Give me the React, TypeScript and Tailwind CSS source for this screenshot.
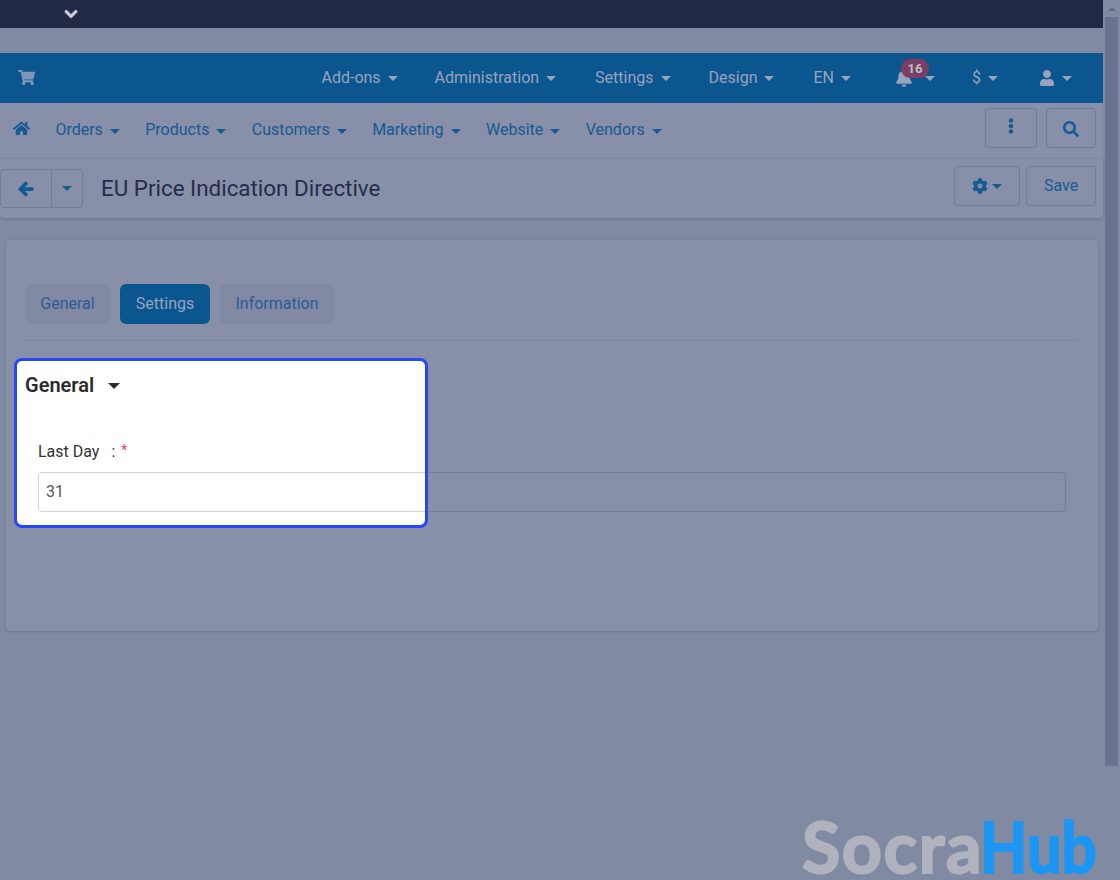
import { FaArrowLeft, FaBell, FaChevronDown, FaCog, FaEllipsisV, FaHome, FaSearch, FaShoppingCart, FaUser } from 'react-icons/fa'

function Caret({ className }: { className: string }) {
  return <span className={`inline-block h-0 w-0 border-x-[5px] border-t-[5px] border-x-transparent ${className}`} />
}

function TopItem({ label }: { label: string }) {
  return (
    <div className="flex items-center gap-[7px]">
      <span>{label}</span>
      <Caret className="border-t-[#98a3bd]" />
    </div>
  )
}

function SubItem({ label }: { label: string }) {
  return (
    <div className="flex items-center gap-[7px]">
      <span>{label}</span>
      <Caret className="mt-[3px] border-t-[#155a93]" />
    </div>
  )
}

export default function App() {
  return (
    <div className="relative flex h-[880px] w-[1120px] overflow-hidden bg-[#808aa3] font-['Roboto',sans-serif] text-[16px]">
      <div className="flex w-[1103px] flex-col">
        <div className="h-[28px] bg-[#212945] pl-[64px] pt-[7px] text-[#c5c9d6]">
          <FaChevronDown className="h-[14px] w-[14px]" stroke="currentColor" strokeWidth={40} />
        </div>

        <div className="mt-[25px] flex h-[50px] items-center justify-between bg-[#0b568f] pl-[18px] pr-[31px] text-[#98a3bd]">
          <FaShoppingCart className="mb-[2px] h-[17px] w-[17px] text-[#7f97b8]" />
          <div className="flex items-center">
            <TopItem label="Add-ons" />
            <div className="ml-[37px]"><TopItem label="Administration" /></div>
            <div className="ml-[39px]"><TopItem label="Settings" /></div>
            <div className="ml-[38px]"><TopItem label="Design" /></div>
            <div className="ml-[39px]"><TopItem label="EN" /></div>
            <div className="relative ml-[44px] flex items-center gap-[12px]">
              <FaBell className="h-[18px] w-[18px] text-[#98a3bd]" />
              <Caret className="border-t-[#98a3bd]" />
              <span className="absolute left-[6px] top-[-10px] flex h-[19px] w-[28px] items-center justify-center rounded-[9px] bg-[#7c3f63] text-[13px] font-bold text-[#b9bfd0]">16</span>
            </div>
            <div className="ml-[37px]"><TopItem label="$" /></div>
            <div className="ml-[41px] flex items-center gap-[7px]">
              <FaUser className="h-[16px] w-[16px]" />
              <Caret className="border-t-[#98a3bd]" />
            </div>
          </div>
        </div>

        <div className="flex h-[56px] items-center justify-between border-b border-b-[#848ca5] bg-[#888fa8] pl-[13px] pr-[7px] text-[#155a93]">
          <div className="mb-[2px] flex items-center gap-[25.4px]">
            <FaHome className="mb-[3px] h-[17px] w-[17px]" />
            <SubItem label="Orders" />
            <SubItem label="Products" />
            <SubItem label="Customers" />
            <SubItem label="Marketing" />
            <SubItem label="Website" />
            <SubItem label="Vendors" />
          </div>
          <div className="mt-[-6px] flex gap-[9px]">
            <div className="flex h-[40px] w-[52px] items-center justify-center rounded-[4px] border border-[#737d98]">
              <FaEllipsisV className="mb-[4px] h-[16px] w-[16px]" />
            </div>
            <div className="flex h-[40px] w-[50px] items-center justify-center rounded-[4px] border border-[#737d98]">
              <FaSearch className="mt-[2px] h-[16px] w-[16px]" />
            </div>
          </div>
        </div>

        <div className="flex h-[59px] items-center justify-between rounded-b-[4px] bg-[#888fa8] pr-[7px] shadow-[0_1px_3px_rgba(60,70,100,0.35)]">
          <div className="flex items-center">
            <div className="flex h-[39px] w-[83px] rounded-[4px] border border-[#737d98]">
              <div className="flex w-[51px] items-center justify-center border-r border-r-[#737d98] text-[#155a93]">
                <FaArrowLeft className="h-[16px] w-[16px]" stroke="currentColor" strokeWidth={40} />
              </div>
              <div className="flex flex-1 items-center justify-center">
                <Caret className="border-t-[#155a93]" />
              </div>
            </div>
            <span className="ml-[18px] text-[22.4px] text-[#252d4a]">EU Price Indication Directive</span>
          </div>
          <div className="mt-[-5px] flex gap-[6px] text-[#155a93]">
            <div className="flex h-[40px] w-[66px] items-center justify-center gap-[4px] rounded-[4px] border border-[#737d98]">
              <FaCog className="h-[16px] w-[16px]" />
              <Caret className="border-t-[#155a93]" />
            </div>
            <div className="flex h-[40px] w-[70px] items-center justify-center rounded-[4px] border border-[#737d98]">Save</div>
          </div>
        </div>

        <div className="ml-[6px] mt-[22px] h-[391px] w-[1092px] rounded-[4px] bg-[#888fa8] pl-[19px] pr-[20px] pt-[44px] shadow-[0_1px_3px_rgba(60,70,100,0.3)]">
          <div className="flex gap-[10px] border-b border-b-[#7b84a0] pb-[16px]">
            <div className="flex h-[40px] w-[85px] items-center justify-center rounded-[6px] bg-[#828aa3] text-[#2a5b95]">General</div>
            <div className="flex h-[40px] w-[90px] items-center justify-center rounded-[6px] bg-[#0b568f] text-[#98a3bd]">Settings</div>
            <div className="flex h-[40px] w-[114px] items-center justify-center rounded-[6px] bg-[#828aa3] text-[#2a5b95]">Information</div>
          </div>
          <div className="ml-[13px] mt-[131px] h-[40px] w-[1028px] rounded-[4px] border border-[#737d98]" />
        </div>
      </div>

      <div className="ml-[2px] flex h-[766px] w-[13px] flex-col bg-[#6a7290]">
        <div className="flex h-[17px] items-center justify-center bg-[#808aa3]">
          <span className="h-0 w-0 border-x-[4px] border-b-[4px] border-x-transparent border-b-[#5f6885]" />
        </div>
      </div>

      {/* highlight over the dimmed page */}
      <div className="absolute left-[14px] top-[358px] h-[170px] w-[414px] overflow-hidden rounded-[8px] border-[3px] border-[#2547f5] bg-white">
        <div className="flex items-center gap-[14px] pl-[8px] pt-[9px] text-[20px] font-semibold text-[#2b2b2b]">
          <span>General</span>
          <Caret className="mt-[2px] border-x-[6px] border-t-[6px] border-t-[#2b2b2b]" />
        </div>
        <div className="ml-[21px] mt-[42px] flex h-[20px] items-center text-[16px] text-[#333333]">
          <span>Last Day</span>
          <span className="ml-[12px]">:</span>
          <span className="mb-[4px] ml-[6px] text-[14px] text-[#f0405a]">*</span>
        </div>
        <div className="ml-[21px] mt-[10px] flex h-[40px] w-[1028px] items-center rounded-[4px] border border-[#ced4da] pl-[7px] text-[#555555]">31</div>
      </div>

      <div className="absolute left-[802px] top-[813px] flex font-['Lato',sans-serif] text-[70px] font-bold leading-[66px]">
        <span className="tracking-[1.5px] text-[#b0b3bd] [-webkit-text-stroke:2px_#b0b3bd]">Socra</span>
        <span className="ml-[-3px] origin-left scale-x-[0.88] text-[#1b96f3] [-webkit-text-stroke:2px_#1b96f3]">Hub</span>
      </div>
    </div>
  )
}
